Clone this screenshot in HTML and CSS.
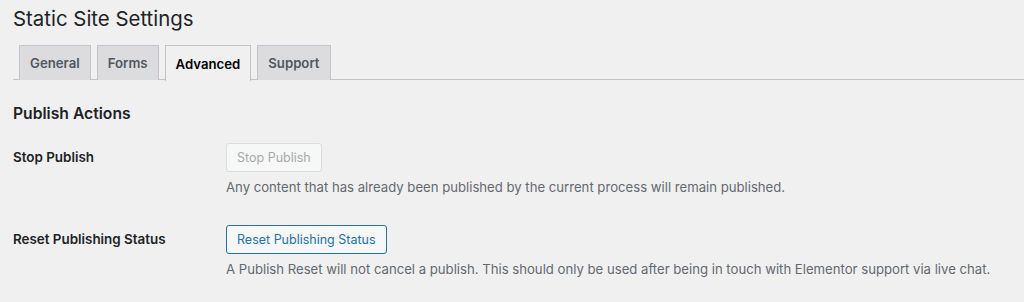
FILE: index.html
```html
<!DOCTYPE html>
<html lang="en">
<head>
    <meta charset="UTF-8">
    <meta name="viewport" content="width=device-width, initial-scale=1.0">
    <title>Static Site Settings</title>
    <link rel="stylesheet" href="styles.css">
</head>
<body>
    <div class="wrap">
        <h1>Static Site Settings</h1>
        <nav class="nav-tab-wrapper">
            <a class="nav-tab">General</a>
            <a class="nav-tab">Forms</a>
            <a class="nav-tab nav-tab-active">Advanced</a>
            <a class="nav-tab">Support</a>
        </nav>

        <h2>Publish Actions</h2>
        <div class="form-table">
            <div class="row">
                <div class="label">Stop Publish</div>
                <div class="field">
                    <button class="button" disabled>Stop Publish</button>
                    <p class="description">Any content that has already been published by the current process will remain published.</p>
                </div>
            </div>
            <div class="row">
                <div class="label">Reset Publishing Status</div>
                <div class="field">
                    <button class="button">Reset Publishing Status</button>
                    <p class="description">A Publish Reset will not cancel a publish. This should only be used after being in touch with Elementor support via live chat.</p>
                </div>
            </div>
        </div>
    </div>
</body>
</html>
```

FILE: styles.css
```css
body {
    margin: 0;
    background: #f0f0f1;
    color: #1d2327;
    font-family: Inter, "Noto Sans", sans-serif;
    font-size: 13px;
}
.wrap {
    padding: 0 0 0 13px;
}
h1 {
    margin: 0;
    padding: 6px 0 0;
    font-size: 20.4px;
    font-weight: 400;
    line-height: 26px;
    color: #1d2327;
}
.nav-tab-wrapper {
    display: flex;
    gap: 6px;
    margin-top: 13px;
    padding-left: 6px;
    border-bottom: 1px solid #c3c4c7;
    height: 34px;
}
.nav-tab {
    display: flex;
    align-items: center;
    padding: 0 10px;
    height: 34px;
    border: 1px solid #c3c4c7;
    border-bottom: none;
    background: #dcdcde;
    color: #50575e;
    font-size: 13.2px;
    font-weight: 600;
}
.nav-tab-active {
    background: #f0f0f1;
    color: #000;
    height: 35px;
    margin-bottom: -1px;
}
h2 {
    margin: 24px 0 0;
    font-size: 15.7px;
    font-weight: 600;
    line-height: 20px;
}
.form-table {
    margin-top: 19px;
}
.row {
    display: flex;
    padding-bottom: 29px;
}
.label {
    width: 213px;
    flex: none;
    font-weight: 600;
    font-size: 13.4px;
    padding-top: 6px;
    line-height: 17px;
}
.button {
    height: 29px;
    padding: 0 10px;
    border: 1px solid #2271b1;
    border-radius: 3px;
    background: #f6f7f7;
    color: #2271b1;
    font-family: inherit;
    font-size: 12.5px;
}
.button:disabled {
    border-color: #dcdcde;
    color: #a7aaad;
}
.description {
    margin: 6px 0 0;
    color: #646970;
    font-size: 13.15px;
    line-height: 18px;
}
```
